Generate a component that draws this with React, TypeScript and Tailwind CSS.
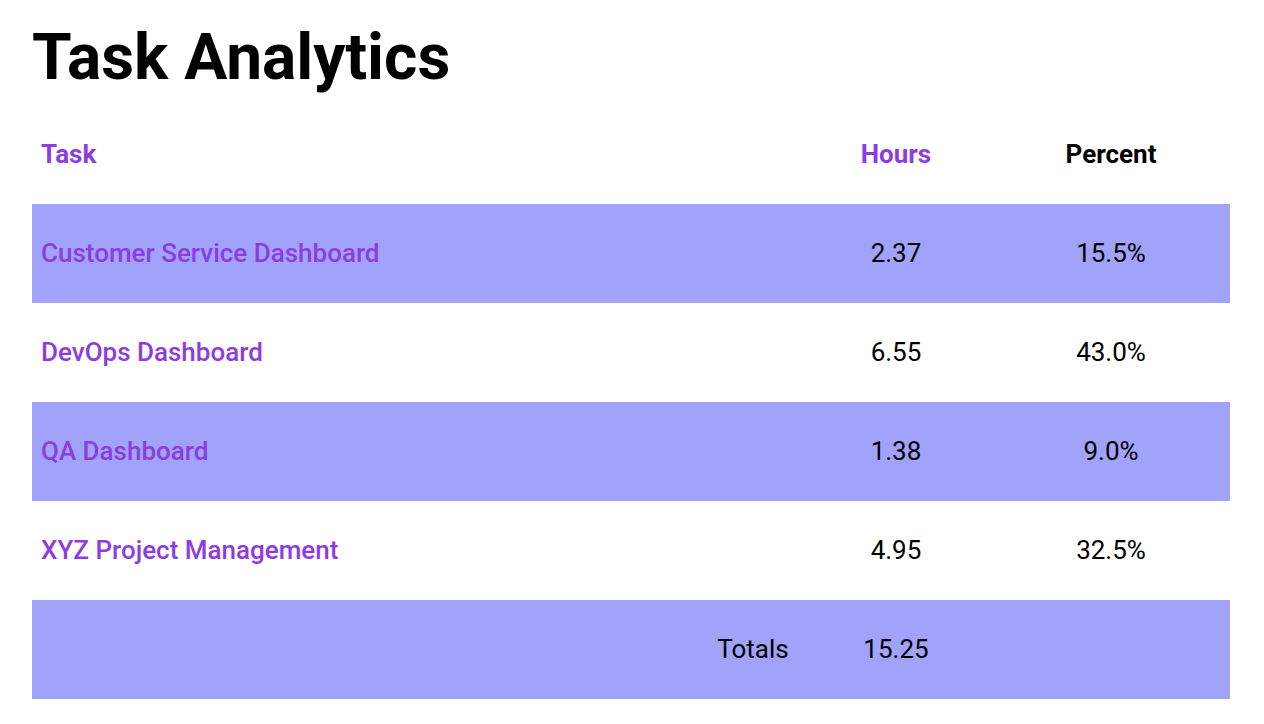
const rows = [
  { task: 'Customer Service Dashboard', hours: '2.37', percent: '15.5%' },
  { task: 'DevOps Dashboard', hours: '6.55', percent: '43.0%' },
  { task: 'QA Dashboard', hours: '1.38', percent: '9.0%' },
  { task: 'XYZ Project Management', hours: '4.95', percent: '32.5%' },
];

const grid = 'grid grid-cols-[674px_94px_192px_238px] h-[99px] items-center';

export default function App() {
  return (
    <div className="min-h-screen bg-white px-8 pt-[26px] text-black" style={{ fontFamily: 'Roboto, "Noto Sans", sans-serif' }}>
      <h1 className="text-[64px] leading-none font-bold">Task Analytics</h1>

      <div className="mt-[15px] w-[1198px] text-[26px]">
        <div className={`${grid} font-bold`}>
          <div className="col-span-2 pl-[9px] text-[#8e3be0]">Task</div>
          <div className="text-center text-[#8e3be0]">Hours</div>
          <div className="text-center">Percent</div>
        </div>

        {rows.map((r, i) => (
          <div key={r.task} className={`${grid} ${i % 2 === 0 ? 'bg-[#a0a3f9]' : 'bg-white'}`}>
            <div className="col-span-2 pl-[9px] font-medium text-[#8e3be0]">{r.task}</div>
            <div className="text-center">{r.hours}</div>
            <div className="text-center">{r.percent}</div>
          </div>
        ))}

        <div className={`${grid} bg-[#a0a3f9]`}>
          <div />
          <div className="text-center">Totals</div>
          <div className="text-center">15.25</div>
          <div />
        </div>
      </div>
    </div>
  );
}
